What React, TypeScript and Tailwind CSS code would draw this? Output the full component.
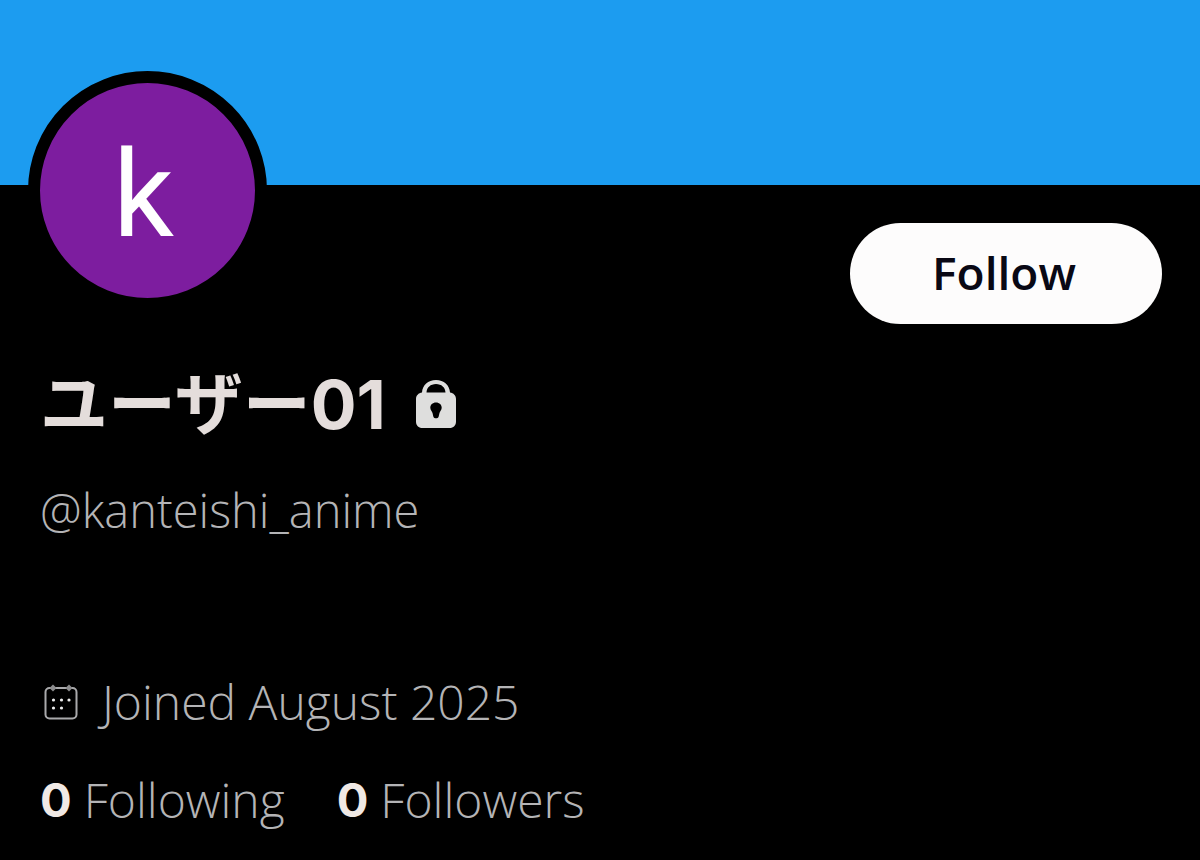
import { useState } from "react";

const stats = [
  { label: "Following", value: 0 },
  { label: "Followers", value: 0 },
];

function LockIcon() {
  return (
    <svg viewBox="0 0 40 50" className="w-10 h-[50px]" role="img" aria-label="Protected account">
      <path
        fill="#dededd"
        fillRule="evenodd"
        d="M6 13.500C6.500 6 12 1 20 1s13.500 5 14 12.500C37.500 14 40 16.500 40 20v22.500c0 4-2.500 6.500-6.500 6.500h-27C2.500 49 0 46.500 0 42.500V20c0-3.500 2.500-6 6-6.500ZM10.500 13.500h19C29.300 8.500 25.500 5 20 5s-9.300 3.500-9.500 8.500ZM20 23.500c-3.500 0-5.700 2.300-5.700 5.300 0 2.300 1.700 3.400 2.200 5.200l.9 3.700c.7 2.200 4.500 2.200 5.200 0l.9-3.700c.5-1.800 2.200-2.900 2.200-5.200 0-3-2.200-5.300-5.700-5.300Z"
      />
    </svg>
  );
}

function CalendarIcon() {
  return (
    <svg viewBox="0 0 34 36" className="w-[34px] h-9" fill="none" aria-hidden="true">
      <rect x="1.500" y="4" width="31" height="30.500" rx="4" stroke="#a9a9ab" strokeWidth="2" />
      <g fill="#8c8c8e">
        <path d="M9 .5l3.500 3.500L9 7.500 5.500 4Z" />
        <path d="M25 .5l3.500 3.500L25 7.500 21.500 4Z" />
      </g>
      <g fill="#eeeeee">
        <circle cx="9.500" cy="16" r="1.600" />
        <circle cx="17.500" cy="16" r="1.600" />
        <circle cx="25" cy="16" r="1.600" />
        <circle cx="9.500" cy="24" r="1.600" />
        <circle cx="17.500" cy="24" r="1.600" />
      </g>
    </svg>
  );
}

function App() {
  const [following, setFollowing] = useState(false);

  return (
    <main className="min-h-screen bg-black font-['Open_Sans','Noto_Sans_CJK_JP',sans-serif] text-[#b4b4b6]">
      {/* Banner */}
      <div className="h-[185px] bg-[#1c9cf0]" />

      {/* Avatar + follow */}
      <div className="flex items-start justify-between pl-7 pr-[38px]">
        <div className="-mt-[114px] flex size-[239px] items-center justify-center rounded-full border-12 border-black bg-[#7d1d9f] pt-2 pr-2 font-['Roboto',sans-serif] text-[120px] leading-none text-white">
          k
        </div>
        <button
          type="button"
          onClick={() => setFollowing(!following)}
          className="mt-[38px] h-[101px] w-[312px] rounded-full bg-[#fdfcfc] pr-1 pb-0.5 text-[46px] font-semibold text-[#090814]"
        >
          {following ? "Following" : "Follow"}
        </button>
      </div>

      <div className="px-10">
        {/* Name */}
        <div className="mt-[34px] flex items-center gap-[30px]">
          <h1 className="font-['Inter','Noto_Sans_CJK_JP',sans-serif] text-[68px] leading-[92px] font-bold text-[#e4dddb]">
            ユーザー01
          </h1>
          <LockIcon />
        </div>
        <p className="mt-7 text-[47px] leading-[64px] font-light">@kanteishi_anime</p>

        <div className="mt-32 flex items-center gap-6 pl-1">
          <CalendarIcon />
          <p className="text-[48px] leading-[64px] font-light">Joined August 2025</p>
        </div>

        {/* Stats */}
        <div className="mt-[34px] flex gap-13 text-[48px] leading-[64px] font-light">
          {stats.map((s) => (
            <a key={s.label} href={`#${s.label.toLowerCase()}`} className="flex gap-3">
              <span className="font-['Inter',sans-serif] text-[47px] font-bold text-[#f0e9e5]">{s.value}</span>
              <span>{s.label}</span>
            </a>
          ))}
        </div>
      </div>
    </main>
  );
}

export default App;
